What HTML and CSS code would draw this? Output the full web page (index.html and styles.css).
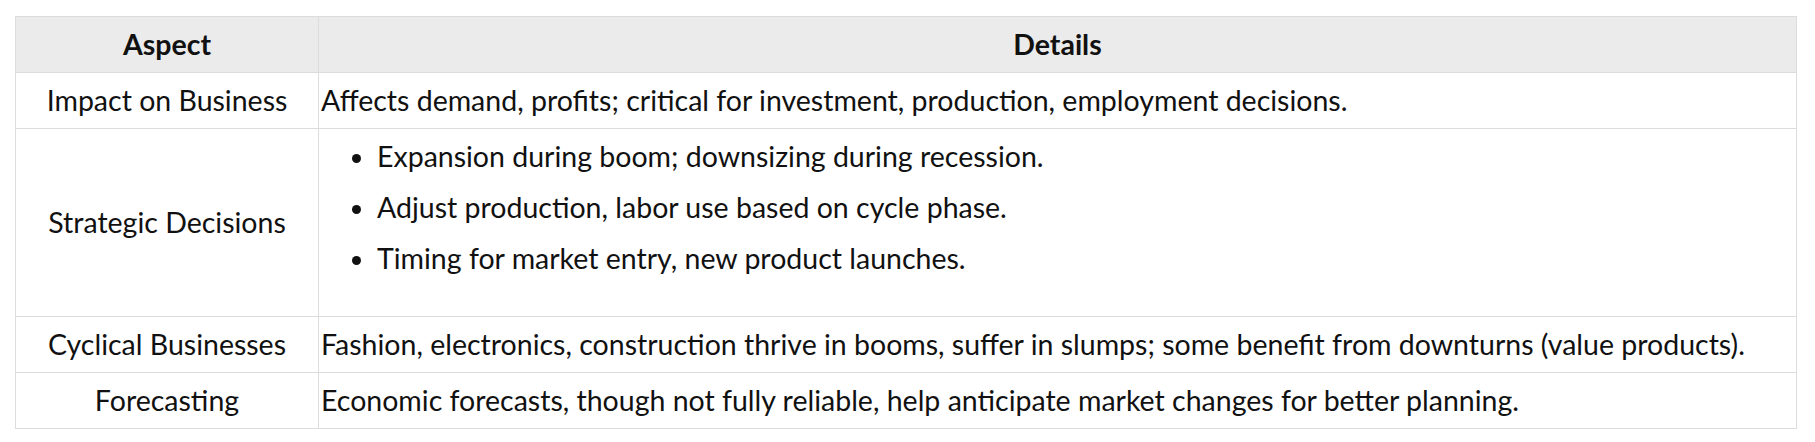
FILE: index.html
```html
<!DOCTYPE html>
<html>
<head>
<meta charset="utf-8">
<link rel="stylesheet" href="styles.css">
</head>
<body>
<table class="grid">
  <thead>
    <tr><th class="c1">Aspect</th><th>Details</th></tr>
  </thead>
  <tbody>
    <tr><td class="c1">Impact on Business</td><td>Affects demand, profits; critical for investment, production, employment decisions.</td></tr>
    <tr><td class="c1">Strategic Decisions</td><td class="listcell"><ul>
      <li>Expansion during boom; downsizing during recession.</li>
      <li>Adjust production, labor use based on cycle phase.</li>
      <li>Timing for market entry, new product launches.</li>
    </ul></td></tr>
    <tr><td class="c1">Cyclical Businesses</td><td>Fashion, electronics, construction thrive in booms, suffer in slumps; some benefit from downturns (value products).</td></tr>
    <tr><td class="c1">Forecasting</td><td>Economic forecasts, though not fully reliable, help anticipate market changes for better planning.</td></tr>
  </tbody>
</table>
</body>
</html>
```
FILE: styles.css
```css
html, body { margin: 0; background: #fff; }
body {
  padding: 16px 18px 0 15px;
  font-family: Lato, "Noto Sans", sans-serif;
  font-size: 28.5px;
  color: #111;
}
.grid {
  width: 100%;
  border-collapse: collapse;
}
.grid th, .grid td {
  border: 1px solid #dcdcdc;
  padding: 9px 2px;
  line-height: 37px;
  vertical-align: middle;
  text-align: left;
}
.grid th {
  background: #ebebeb;
  font-weight: 700;
  text-align: center;
}
.grid .c1 { width: 298px; text-align: center; }
.grid ul { margin: 0; padding: 0 0 16px 56px; }
.grid li { margin-bottom: 14px; }
```
